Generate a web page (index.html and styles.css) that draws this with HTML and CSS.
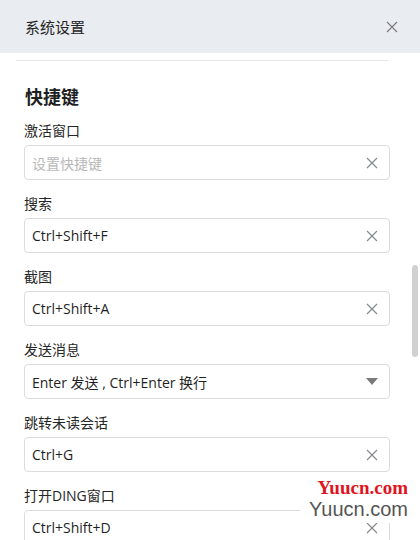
FILE: index.html
```html
<!DOCTYPE html>
<html lang="zh-CN">
  <head>
    <meta charset="UTF-8" />
    <meta name="viewport" content="width=device-width, initial-scale=1.0" />
    <title>系统设置</title>
    <link rel="stylesheet" href="styles.css">
  </head>
  <body>
    <div class="dialog">
      <div class="dialog-header">
        <span class="dialog-title">系统设置</span>
        <svg class="close" width="12" height="12" viewBox="0 0 12 12">
          <path d="M1 1L11 11M11 1L1 11" stroke="#7a7d82" stroke-width="1.2" fill="none" />
        </svg>
      </div>
      <div class="dialog-body">
        <div class="divider"></div>
        <h2 class="section-title">快捷键</h2>

        <div class="field">
          <div class="label">激活窗口</div>
          <div class="input">
            <span class="placeholder">设置快捷键</span>
            <svg class="clear" width="12" height="12" viewBox="0 0 12 12"><path d="M1 1L11 11M11 1L1 11" stroke="#85888c" stroke-width="1.2" fill="none" /></svg>
          </div>
        </div>

        <div class="field">
          <div class="label">搜索</div>
          <div class="input">
            <span class="value">Ctrl+Shift+F</span>
            <svg class="clear" width="12" height="12" viewBox="0 0 12 12"><path d="M1 1L11 11M11 1L1 11" stroke="#85888c" stroke-width="1.2" fill="none" /></svg>
          </div>
        </div>

        <div class="field">
          <div class="label">截图</div>
          <div class="input">
            <span class="value">Ctrl+Shift+A</span>
            <svg class="clear" width="12" height="12" viewBox="0 0 12 12"><path d="M1 1L11 11M11 1L1 11" stroke="#85888c" stroke-width="1.2" fill="none" /></svg>
          </div>
        </div>

        <div class="field">
          <div class="label">发送消息</div>
          <div class="input">
            <span class="value">Enter 发送 , Ctrl+Enter 换行</span>
            <svg class="arrow" width="12" height="8" viewBox="0 0 12 8"><path d="M0 0H12L6 7Z" fill="#7a7a7a" /></svg>
          </div>
        </div>

        <div class="field">
          <div class="label">跳转未读会话</div>
          <div class="input">
            <span class="value">Ctrl+G</span>
            <svg class="clear" width="12" height="12" viewBox="0 0 12 12"><path d="M1 1L11 11M11 1L1 11" stroke="#85888c" stroke-width="1.2" fill="none" /></svg>
          </div>
        </div>

        <div class="field">
          <div class="label">打开DING窗口</div>
          <div class="input">
            <span class="value">Ctrl+Shift+D</span>
            <svg class="clear" width="12" height="12" viewBox="0 0 12 12"><path d="M1 1L11 11M11 1L1 11" stroke="#85888c" stroke-width="1.2" fill="none" /></svg>
          </div>
        </div>
      </div>
      <div class="scroll-thumb"></div>
      <div class="watermark">
        <div class="wm-red">Yuucn.com</div>
        <div class="wm-gray">Yuucn.com</div>
      </div>
    </div>
  </body>
</html>
```

FILE: styles.css
```css
body {
  margin: 0;
  font-family: "Open Sans", "Noto Sans CJK SC", sans-serif;
  background: #ffffff;
  color: #222;
}
.dialog {
  position: relative;
  width: 420px;
  height: 540px;
  overflow: hidden;
  background: #ffffff;
}
.dialog-header {
  height: 53px;
  background: #e9ecf0;
  display: flex;
  align-items: center;
  justify-content: space-between;
  padding: 0 22px 0 25px;
}
.dialog-title {
  font-size: 15px;
  color: #262626;
}
.close {
  display: block;
}
.dialog-body {
  padding: 0 30px 0 24px;
}
.divider {
  height: 1px;
  background: #e6e6e6;
  margin: 7px 2px 0 -8px;
}
.section-title {
  margin: 24px 0 12px 1px;
  font-size: 18px;
  line-height: 24px;
  font-weight: 700;
  color: #1f1f1f;
}
.field {
  margin-bottom: 14px;
}
.label {
  font-size: 14px;
  line-height: 20px;
  margin-bottom: 4px;
  color: #262626;
}
.input {
  height: 35px;
  box-sizing: border-box;
  border: 1px solid #dcdcdc;
  border-radius: 4px;
  display: flex;
  align-items: center;
  justify-content: space-between;
  padding: 0 11px 0 7px;
  font-size: 14px;
}
.placeholder {
  color: #b8b8b8;
}
.value {
  color: #1f1f1f;
}
.clear,
.arrow {
  display: block;
}
.scroll-thumb {
  position: absolute;
  right: 2px;
  top: 265px;
  width: 6px;
  height: 92px;
  border-radius: 3px;
  background: #d0d1d3;
}
.watermark {
  position: absolute;
  left: 300px;
  top: 478px;
  width: 112px;
  height: 45px;
  background: #ffffff;
  text-align: right;
  padding-right: 4px;
  box-sizing: border-box;
}
.wm-red {
  font-family: "Liberation Serif", serif;
  font-weight: 700;
  font-size: 19px;
  line-height: 19px;
  color: #e0141e;
}
.wm-gray {
  font-family: "Liberation Sans", sans-serif;
  font-size: 20px;
  line-height: 24px;
  color: #555;
}
```
